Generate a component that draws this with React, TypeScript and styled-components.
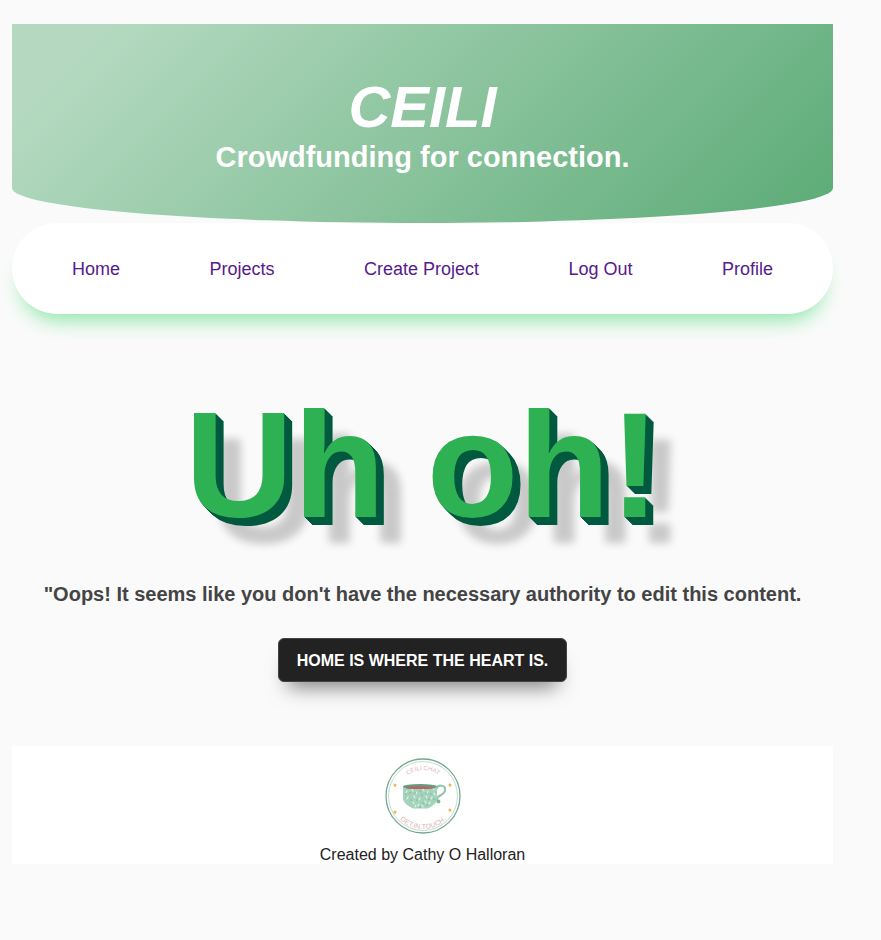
import React from "react";
import styled, { createGlobalStyle } from "styled-components";

const GlobalStyle = createGlobalStyle`
  * {
    box-sizing: border-box;
  }

  body {
    margin: 0;
    background: #fafafa;
    color: #222;
    font-family: "Liberation Sans", Arial, Helvetica, sans-serif;
    font-size: 16px;
  }
`;

const Page = styled.div`
  padding: 24px 48px 24px 12px;
`;

const Banner = styled.header`
  display: flex;
  flex-direction: column;
  align-items: center;
  padding: 48px 16px 51px;
  color: #fff;
  text-align: center;
  background: linear-gradient(135deg, #b4d9c0 10%, #5bab76 100%);
  border-radius: 0 0 50% 50% / 0 0 35px 35px;
`;

const SiteName = styled.h1`
  margin: 0;
  font-size: 58px;
  font-style: italic;
  line-height: 70px;
`;

const Tagline = styled.h2`
  margin: 0;
  font-size: 29px;
  line-height: 30px;
`;

const NavBar = styled.nav`
  display: flex;
  flex-wrap: wrap;
  justify-content: space-between;
  gap: 16px;
  padding: 36px 60px 34px;
  background: #fff;
  border-radius: 48px;
  box-shadow: 0 16px 20px -10px #8ae6a5;
`;

const NavLink = styled.a`
  color: #551a8b;
  font-size: 18px;
  line-height: 21px;
  text-decoration: none;
`;

const Message = styled.main`
  display: flex;
  flex-direction: column;
  align-items: center;
  padding: 64px 0;
  text-align: center;
`;

const Headline = styled.h1`
  margin: 0;
  color: #2db152;
  font-size: 150px;
  line-height: 174px;
  text-shadow:
    1px 1px #005a3f,
    2px 2px #005a3f,
    3px 3px #005a3f,
    4px 4px #005a3f,
    5px 5px #005a3f,
    6px 6px #005a3f,
    7px 7px #005a3f,
    8px 8px #005a3f,
    25px 26px 8px rgba(0, 0, 0, 0.2);
`;

const Explanation = styled.p`
  margin: 30px 0 32px;
  color: #444;
  font-size: 20px;
  font-weight: 700;
  line-height: 24px;
`;

const HomeButton = styled.button`
  padding: 13px 18px 11px;
  border: 1px solid #444;
  border-radius: 6px;
  background: #222;
  color: #fff;
  font: inherit;
  font-weight: 700;
  line-height: 18px;
  text-transform: uppercase;
  box-shadow: 0 15px 20px -10px rgba(0, 0, 0, 0.5);
  cursor: pointer;
`;

const Footer = styled.footer`
  display: flex;
  flex-direction: column;
  align-items: center;
  gap: 12px;
  padding-top: 12px;
  background: #fff;
`;

const Credit = styled.p`
  margin: 0;
  line-height: 18px;
`;

const Badge = styled.svg`
  display: block;
  width: 76px;
  height: 76px;
`;

const CurvedText = styled.text`
  fill: #dcb4b7;
  font-family: "Liberation Sans", sans-serif;
`;

const links = ["Home", "Projects", "Create Project", "Log Out", "Profile"];

const stars = [[10, 27], [65, 27], [10, 54], [65, 52]];

const lightFlecks = [
  [22, 33], [27, 31], [32, 34], [38, 31], [43, 33], [48, 30], [23, 39],
  [29, 38], [35, 40], [41, 38], [47, 39], [28, 44], [34, 46], [40, 43],
  [45, 44], [37, 47], [31, 47], [49, 35],
];

const darkFlecks = [
  [21, 36], [25, 35], [30, 35], [35, 33], [41, 35], [46, 36], [26, 42],
  [32, 42], [37, 37], [38, 45], [44, 41], [35, 49], [42, 47], [49, 41],
];

function TeacupLogo() {
  return (
    <Badge viewBox="0 0 76 76" role="img" aria-label="Ceili Chat, get in touch">
      <defs>
        <path id="upper-arc" d="M12 38a26 26 0 0 1 52 0" />
        <path id="lower-arc" d="M5 38a33 33 0 0 0 66 0" />
      </defs>
      <circle cx="38" cy="38" r="37" fill="#fff" stroke="#75aa91" strokeWidth="1.3" />
      <circle cx="38" cy="38" r="34.5" fill="none" stroke="#a9cdbb" strokeWidth=".7" />
      <CurvedText fontSize="6" textAnchor="middle">
        <textPath href="#upper-arc" startOffset="50%">CEILI CHAT</textPath>
      </CurvedText>
      <CurvedText fontSize="7" textAnchor="middle">
        <textPath href="#lower-arc" startOffset="50%">GET.IN.TOUCH.</textPath>
      </CurvedText>
      {stars.map(([x, y]) => (
        <path
          key={`${x}-${y}`}
          transform={`translate(${x} ${y})`}
          d="M0-2 .7-.7 2-.5 1 .5 1.3 2 0 1.3-1.3 2-1 .5-2-.5-.7-.7Z"
          fill="#e9b64b"
        />
      ))}
      <path
        d="M51 31c2-5 10-4 9 1 0 4-5 5-7 7-2 2-1 3 0 5"
        fill="none"
        stroke="#91c8ad"
        strokeWidth="2.2"
        strokeLinecap="round"
      />
      <circle cx="53.5" cy="43.5" r="1.9" fill="#7eb69b" />
      <path d="M18 28v13c1 5 6 7 10 9.500h15c5-3 9-5 9-10V28Z" fill="#a3d3ba" />
      {lightFlecks.map(([x, y], index) => (
        <path
          key={`${x}-${y}`}
          d={`M${x} ${y}l${index % 2 ? 1 : -1} 2`}
          stroke="#e7f1e9"
          strokeWidth="1.1"
          strokeLinecap="round"
        />
      ))}
      {darkFlecks.map(([x, y]) => (
        <circle key={`${x}-${y}`} cx={x} cy={y} r=".6" fill="#5a9b7e" />
      ))}
      <ellipse cx="35" cy="28.5" rx="17" ry="2.5" fill="#659c84" />
      <ellipse cx="35" cy="29.7" rx="14.5" ry="1.4" fill="#b86460" />
    </Badge>
  );
}

export default function App() {
  return (
    <>
      <GlobalStyle />
      <Page>
        <Banner>
          <SiteName>CEILI</SiteName>
          <Tagline>Crowdfunding for connection.</Tagline>
        </Banner>
        <NavBar aria-label="Main">
          {links.map((label) => (
            <NavLink key={label} href="#">{label}</NavLink>
          ))}
        </NavBar>
        <Message>
          <Headline>Uh oh!</Headline>
          <Explanation>
            "Oops! It seems like you don't have the necessary authority to edit this content.
          </Explanation>
          <HomeButton type="button">Home is where the heart is.</HomeButton>
        </Message>
        <Footer>
          <TeacupLogo />
          <Credit>Created by Cathy O Halloran</Credit>
        </Footer>
      </Page>
    </>
  );
}
